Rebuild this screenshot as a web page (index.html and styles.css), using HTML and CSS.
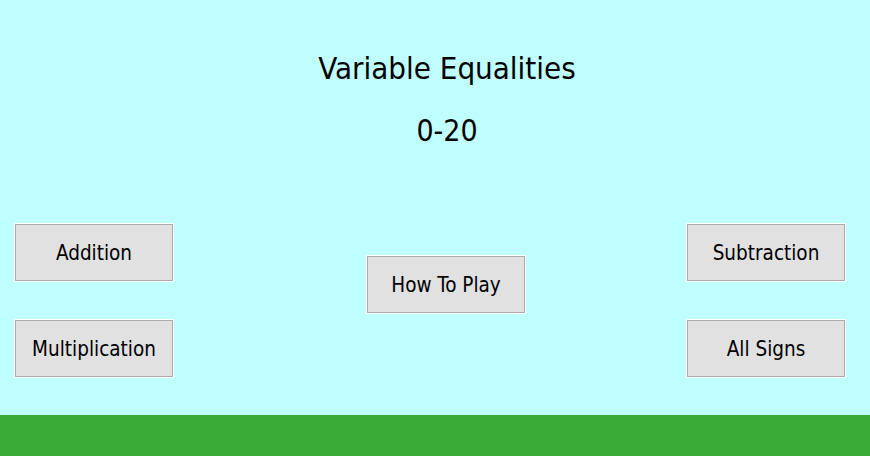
FILE: index.html
```html
<!DOCTYPE html>
<html lang="en">
<head>
<meta charset="utf-8">
<title>Variable Equalities</title>
<link rel="stylesheet" href="styles.css">
</head>
<body>
<div class="page">
  <header class="header">
    <h1 class="title">Variable Equalities</h1>
    <h2 class="range">0-20</h2>
  </header>
  <main class="board">
    <div class="col col-left">
      <button class="btn">Addition</button>
      <button class="btn">Multiplication</button>
    </div>
    <div class="col col-center">
      <button class="btn">How To Play</button>
    </div>
    <div class="col col-right">
      <button class="btn">Subtraction</button>
      <button class="btn">All Signs</button>
    </div>
  </main>
  <footer class="ground"></footer>
</div>
</body>
</html>
```
FILE: styles.css
```css
html, body {
  margin: 0;
  padding: 0;
}
body {
  background: #c0ffff;
  font-family: "DejaVu Sans Condensed", "DejaVu Sans", sans-serif;
  color: #000;
}
.page {
  width: 870px;
  height: 456px;
  display: flex;
  flex-direction: column;
}
.header {
  padding-top: 50px;
  text-align: center;
}
.title, .range {
  margin: 0;
  font-weight: normal;
  font-size: 30px;
  line-height: 36px;
  padding-left: 24px;
}
.title {
  font-size: 31px;
}
.range {
  margin-top: 27px;
}
.board {
  flex: 1;
  display: flex;
  align-items: flex-start;
  padding-top: 75px;
}
.col {
  display: flex;
  flex-direction: column;
  gap: 39px;
}
.col-left {
  margin-left: 15px;
}
.col-center {
  margin-left: 194px;
  margin-top: 32px;
}
.col-right {
  margin-left: 162px;
}
.btn {
  width: 158px;
  height: 57px;
  box-sizing: border-box;
  border: 1px solid #adadad;
  box-shadow: 0 0 0 1px #ffffff;
  background: #e1e1e1;
  font-family: inherit;
  font-size: 20.5px;
  color: #000;
  padding: 0;
  margin: 0;
}
.ground {
  height: 41px;
  background: #39aa35;
}
```
